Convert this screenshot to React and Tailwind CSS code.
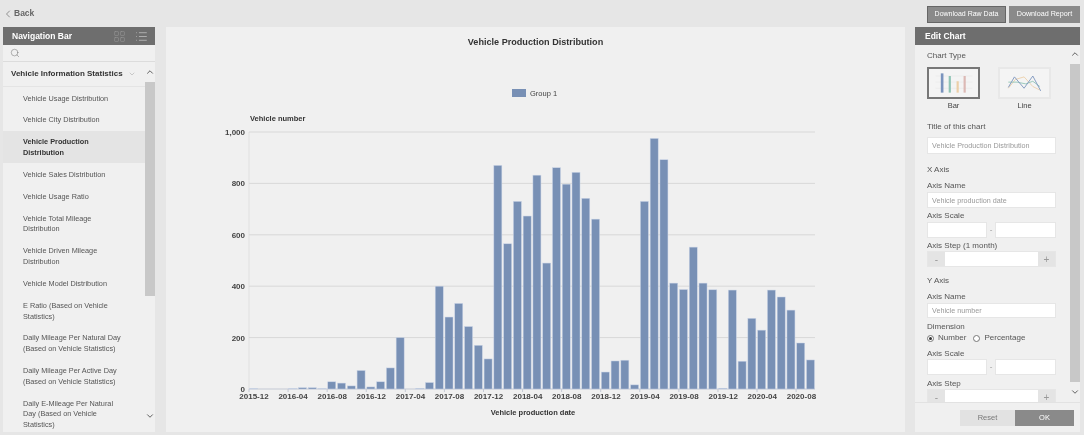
import { ChevronLeft, ChevronDown, ChevronUp, Search, LayoutGrid, List } from 'lucide-react'

const navItems = [
  ['Vehicle Usage Distribution'],
  ['Vehicle City Distribution'],
  ['Vehicle Production', 'Distribution'],
  ['Vehicle Sales Distribution'],
  ['Vehicle Usage Ratio'],
  ['Vehicle Total Mileage', 'Distribution'],
  ['Vehicle Driven Mileage', 'Distribution'],
  ['Vehicle Model Distribution'],
  ['E Ratio (Based on Vehicle', 'Statistics)'],
  ['Daily Mileage Per Natural Day', '(Based on Vehicle Statistics)'],
  ['Daily Mileage Per Active Day', '(Based on Vehicle Statistics)'],
  ['Daily E-Mileage Per Natural', 'Day (Based on Vehicle', 'Statistics)'],
]

const values = [
  1, 0, 0, 0, 1, 5, 5, 1, 28, 23, 12, 72, 8, 28, 82, 200, 0, 2, 25, 400, 280, 333, 243, 170, 117, 870, 565, 730, 673,
  832, 490, 861, 797, 843, 742, 661, 66, 109, 112, 16, 730, 975, 892, 412, 387, 552, 412, 386, 3, 385, 108, 275, 229,
  385, 358, 307, 179, 113,
]

const xLabels = [
  '2015-12', '2016-04', '2016-08', '2016-12', '2017-04', '2017-08', '2017-12', '2018-04',
  '2018-08', '2018-12', '2019-04', '2019-08', '2019-12', '2020-04', '2020-08',
]

function Chart() {
  const y = (v) => 389 - v * 0.257
  return (
    <svg viewBox="166 80 739 340" className="block w-[739px] h-[340px]">
      <rect x="512" y="89" width="14" height="8" fill="#7890b5" />
      <text x="530" y="96" fontSize="7.5" fill="#444">Group 1</text>
      <text x="250" y="121" fontSize="7.5" fontWeight="700" fill="#333">Vehicle number</text>
      <line x1="249" y1="132" x2="249" y2="389" stroke="#e0e0e0" />
      {[0, 200, 400, 600, 800, 1000].map((v) => (
        <g key={v}>
          <line x1="249" x2="815" y1={y(v)} y2={y(v)} stroke={v === 0 ? '#c4c9d4' : '#d8d8d8'} />
          <text x="245" y={y(v) + 3} fontSize="8" textAnchor="end" fontWeight="700" fill="#444">
            {v === 1000 ? '1,000' : v}
          </text>
        </g>
      ))}
      {values.map((v, i) => (
        <rect key={i} x={249.6 + i * 9.77} y={y(v)} width="8" height={v * 0.257} fill="#7890b5" stroke="#c9d3e6" strokeWidth="0.5" />
      ))}
      {xLabels.map((label, i) => (
        <g key={label}>
          <line x1={249 + i * 39.08} x2={249 + i * 39.08} y1="389" y2="392" stroke="#c4c9d4" />
          <text x={254 + i * 39.1} y="399" fontSize="8" textAnchor="middle" fontWeight="700" fill="#444">{label}</text>
        </g>
      ))}
      <text x="533" y="415" fontSize="7.5" textAnchor="middle" fontWeight="700" fill="#333">Vehicle production date</text>
    </svg>
  )
}

function BarThumb() {
  return (
    <svg viewBox="0 0 53 32" className="w-full h-full">
      <g stroke="#e4e4e4" strokeWidth="0.5">
        <line x1="6" x2="48" y1="8" y2="8" />
        <line x1="6" x2="48" y1="15" y2="15" />
        <line x1="6" x2="48" y1="22" y2="22" />
      </g>
      <rect x="12" y="5" width="3" height="22" fill="#7a93bd" />
      <rect x="21" y="8" width="2.5" height="19" fill="#8fc4b5" />
      <rect x="30" y="14" width="2.5" height="13" fill="#eccfa8" />
      <rect x="38" y="8" width="2.5" height="19" fill="#dcb9b5" />
    </svg>
  )
}

function LineThumb() {
  return (
    <svg viewBox="0 0 53 32" className="w-full h-full" fill="none" strokeWidth="1">
      <polyline points="8,22 16,12 26,9 36,20 44,24" stroke="#eccfa8" />
      <polyline points="8,15 18,15 28,17 36,14 44,20" stroke="#8fc4b5" />
      <polyline points="8,21 15,9 26,22 36,8 45,25" stroke="#7a93bd" />
    </svg>
  )
}

function Label({ children, className = '' }) {
  return <div className={`leading-[10px] text-[8px] text-[#555] ${className}`}>{children}</div>
}

function Input({ placeholder, className = '' }) {
  return (
    <input
      readOnly
      placeholder={placeholder}
      className={`block bg-white border border-[#e6e6e6] px-[4px] text-[7.2px] outline-none placeholder:text-[#999] ${className}`}
    />
  )
}

function RangeRow({ className = '' }) {
  return (
    <div className={`flex items-center w-[129px] justify-between text-[8px] text-[#999] ${className}`}>
      <Input className="w-[60px] h-full" />
      <span>-</span>
      <Input className="w-[61px] h-full" />
    </div>
  )
}

function Stepper({ className = '' }) {
  return (
    <div className={`flex w-[129px] bg-white border border-[#e6e6e6] text-[10px] text-[#999] ${className}`}>
      <div className="w-[17px] bg-[#e4e4e4] flex items-center justify-center">-</div>
      <div className="flex-1" />
      <div className="w-[17px] bg-[#e4e4e4] flex items-center justify-center">+</div>
    </div>
  )
}

function Radio({ checked, label }) {
  return (
    <span className="flex items-center gap-[4px]">
      <span className="w-[7px] h-[7px] rounded-full border border-[#777] flex items-center justify-center bg-white">
        {checked && <span className="w-[3px] h-[3px] rounded-full bg-[#333]" />}
      </span>
      {label}
    </span>
  )
}

function NavBar() {
  return (
    <aside className="w-[152px] ml-[3px] bg-[#f0f0f0] flex flex-col">
      <div className="h-[18px] bg-[#6e6e6e] flex items-center pl-[9px] pr-[7px] shrink-0">
        <span className="text-[8.5px] font-bold text-white">Navigation Bar</span>
        <LayoutGrid size={13} strokeWidth={1} className="ml-auto text-[#9c9c9c]" />
        <List size={13} strokeWidth={1} className="ml-[9px] text-[#e4e4e4]" />
      </div>
      <div className="h-[17px] flex items-center pl-[7px] border-b border-[#dcdcdc] shrink-0">
        <Search size={10} strokeWidth={1} className="text-[#555]" />
      </div>
      <div className="flex flex-1 min-h-0">
        <div className="flex-1 min-w-0 overflow-hidden">
          <div className="h-[25px] flex items-center pl-[8px] border-b border-[#e4e4e4]">
            <span className="text-[8px] font-bold text-[#333] whitespace-nowrap">Vehicle Information Statistics</span>
            <ChevronDown size={8} strokeWidth={1} className="ml-[5px] text-[#777]" />
          </div>
          {navItems.map((lines) => {
            const selected = lines[0] === 'Vehicle Production'
            return (
              <div
                key={lines[0]}
                className={`pl-[20px] pt-[6.6px] pb-[4.6px] text-[7.3px] leading-[10.7px] whitespace-nowrap ${
                  selected ? 'bg-[#e4e4e4] font-bold text-[#333]' : 'text-[#555]'
                }`}
              >
                {lines.map((line) => (
                  <div key={line}>{line}</div>
                ))}
              </div>
            )
          })}
        </div>
        <div className="w-[10px] shrink-0 flex flex-col items-center">
          <div className="h-[20px] flex items-center">
            <ChevronUp size={10} strokeWidth={2} className="text-[#444]" />
          </div>
          <div className="w-full h-[214px] bg-[#c8c8c8]" />
          <div className="mt-auto h-[22px] pb-[10px] flex items-center">
            <ChevronDown size={10} strokeWidth={2} className="text-[#444]" />
          </div>
        </div>
      </div>
    </aside>
  )
}

function EditPanel() {
  return (
    <aside className="w-[165px] ml-[10px] bg-[#f0f0f0] flex flex-col">
      <div className="h-[18px] bg-[#6e6e6e] flex items-center pl-[10px] shrink-0">
        <span className="text-[8.5px] font-bold text-white">Edit Chart</span>
      </div>
      <div className="flex flex-1 min-h-0 border-b border-[#e2e2e2]">
        <div className="flex-1 min-w-0 pl-[12px] pt-[6px] overflow-hidden">
          <Label>Chart Type</Label>
          <div className="flex gap-[18px] mt-[6px]">
            <div className="w-[53px]">
              <div className="h-[32px] border-2 border-[#777] bg-[#f4f4f4]">
                <BarThumb />
              </div>
              <div className="mt-[2px] text-center text-[7.5px] leading-[10px] text-[#444]">Bar</div>
            </div>
            <div className="w-[53px]">
              <div className="h-[32px] border-2 border-[#e8e8e8] bg-[#f4f4f4]">
                <LineThumb />
              </div>
              <div className="mt-[2px] text-center text-[7.5px] leading-[10px] text-[#444]">Line</div>
            </div>
          </div>
          <Label className="mt-[11px]">Title of this chart</Label>
          <Input placeholder="Vehicle Production Distribution" className="mt-[5px] w-[129px] h-[17px]" />
          <Label className="mt-[11px]">X Axis</Label>
          <Label className="mt-[6px]">Axis Name</Label>
          <Input placeholder="Vehicle production date" className="mt-[1px] w-[129px] h-[16px]" />
          <Label className="mt-[3px]">Axis Scale</Label>
          <RangeRow className="mt-[1px] h-[16px]" />
          <Label className="mt-[3px]">Axis Step (1 month)</Label>
          <Stepper className="h-[16px]" />
          <Label className="mt-[9px]">Y Axis</Label>
          <Label className="mt-[6px]">Axis Name</Label>
          <Input placeholder="Vehicle number" className="mt-[1px] w-[129px] h-[15px]" />
          <Label className="mt-[4px]">Dimension</Label>
          <Label className="mt-[1px] flex gap-[7px] text-[7.5px]">
            <Radio checked label="Number" />
            <Radio label="Percentage" />
          </Label>
          <Label className="mt-[6px]">Axis Scale</Label>
          <RangeRow className="h-[16px]" />
          <Label className="mt-[4px]">Axis Step</Label>
          <Stepper className="h-[16px]" />
        </div>
        <div className="w-[10px] shrink-0 flex flex-col items-center">
          <div className="h-[19px] flex items-center">
            <ChevronUp size={10} strokeWidth={2} className="text-[#444]" />
          </div>
          <div className="w-full h-[319px] bg-[#c8c8c8]" />
          <div className="h-[20px] flex items-center">
            <ChevronDown size={10} strokeWidth={2} className="text-[#444]" />
          </div>
        </div>
      </div>
      <div className="flex-none h-[29px] flex items-center justify-end pr-[6px]">
        <button className="w-[55px] h-[16px] bg-[#e2e2e2] text-[7.5px] text-[#777]">Reset</button>
        <button className="w-[59px] h-[16px] bg-[#8a8a8a] text-[7.5px] text-white">OK</button>
      </div>
    </aside>
  )
}

export default function App() {
  return (
    <div className="w-[1084px] h-[435px] overflow-hidden bg-[#e6e6e6] flex flex-col blur-[0.4px] font-['Liberation_Sans',Arial,sans-serif]">
      <header className="h-[27px] shrink-0 flex items-center">
        <ChevronLeft size={12} strokeWidth={1.2} className="ml-[2px] text-[#555]" />
        <span className="text-[8.5px] font-bold text-[#666]">Back</span>
        <div className="ml-auto mr-[4px] flex gap-[3px] mb-[-1px]">
          <button className="w-[79px] h-[17px] bg-[#8a8a8a] border border-[#666] text-[7px] text-white">Download Raw Data</button>
          <button className="w-[71px] h-[17px] bg-[#8a8a8a] text-[7.2px] text-white">Download Report</button>
        </div>
      </header>
      <main className="flex h-[405px]">
        <NavBar />
        <section className="w-[739px] ml-[11px] bg-[#f0f0f0]">
          <h1 className="h-[53px] pt-[10px] text-center text-[9.1px] leading-[11px] font-bold text-[#333]">
            Vehicle Production Distribution
          </h1>
          <Chart />
        </section>
        <EditPanel />
      </main>
    </div>
  )
}
